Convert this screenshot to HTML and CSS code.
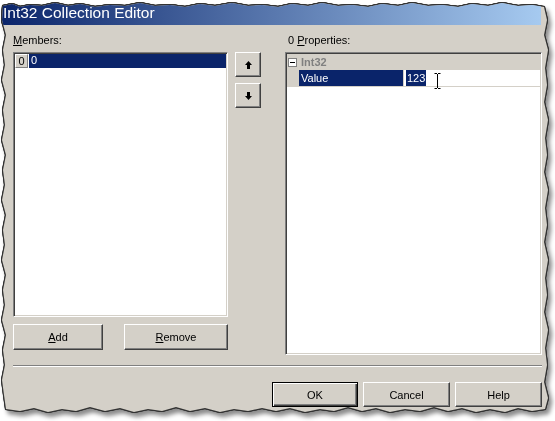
FILE: index.html
```html
<!DOCTYPE html>
<html>
<head>
<meta charset="UTF-8">
<link rel="stylesheet" href="styles.css">
</head>
<body>
<div class="sheet">
  <div class="dialog">
    <div class="title">Int32 Collection Editor</div>
    <div class="body">
      <div class="members">
        <div class="label"><u>M</u>embers:</div>
        <div class="listbox">
          <div class="item"><span class="idx">0</span><span class="name">0</span></div>
        </div>
        <div class="list-buttons">
          <button class="btn add"><u>A</u>dd</button>
          <button class="btn remove"><u>R</u>emove</button>
        </div>
      </div>
      <div class="arrows">
        <button class="btn arrow">
          <svg width="7" height="8" viewBox="0 0 7 8"><polygon points="3.5,0 7,4 5,4 5,8 2,8 2,4 0,4" fill="#000"/></svg>
        </button>
        <button class="btn arrow">
          <svg width="7" height="8" viewBox="0 0 7 8"><polygon points="3.5,8 7,4 5,4 5,0 2,0 2,4 0,4" fill="#000"/></svg>
        </button>
      </div>
      <div class="props">
        <div class="label plabel">0 <u>P</u>roperties:</div>
        <div class="grid">
          <div class="cat"><span class="toggle"></span>Int32</div>
          <div class="prop">
            <span class="pmargin"></span>
            <span class="pname">Value</span>
            <span class="pval"><span class="sel">123</span>
              <svg class="ibeam" width="7" height="16" viewBox="0 0 7 16"><path d="M0.5 0.5h2.5M4 0.5h2.5M3.5 1v14M0.5 15.5h2.5M4 15.5h2.5" stroke="#000" fill="none"/></svg>
            </span>
          </div>
        </div>
      </div>
    </div>
    <div class="sep"></div>
    <div class="footer">
      <button class="btn default">OK</button>
      <button class="btn">Cancel</button>
      <button class="btn">Help</button>
    </div>
  </div>
</div>
</body>
</html>
```
FILE: styles.css
```css
* {
  box-sizing: border-box;
}

body {
  margin: 0;
  background: #fff;
  font-family: "Liberation Sans", Arial, sans-serif;
  font-size: 11px;
  color: #000;
}

.sheet {
  width: 555px;
  height: 421px;
  filter: drop-shadow(1px 0 0 #333) drop-shadow(-1px 0 0 #333) drop-shadow(0 1px 0 #333) drop-shadow(0 -1px 0 #333) drop-shadow(3px 4px 2px rgba(0,0,0,0.45));
}

.dialog {
  width: 548px;
  height: 414px;
  background: #d4d0c8;
  display: flex;
  flex-direction: column;
  clip-path: polygon(3px 6px, 12px 4px, 20px 7px, 30px 5px, 42px 6px, 55px 3px, 68px 6px, 80px 4px, 95px 7px, 110px 5px, 125px 6px, 140px 3px, 155px 6px, 170px 5px, 185px 7px, 200px 4px, 215px 6px, 232px 3px, 248px 6px, 262px 5px, 278px 7px, 292px 4px, 308px 6px, 322px 3px, 338px 6px, 352px 5px, 368px 7px, 382px 4px, 398px 6px, 412px 3px, 428px 6px, 442px 5px, 458px 7px, 472px 4px, 488px 6px, 502px 3px, 518px 6px, 532px 5px, 544px 7px,
    547px 20px, 544px 35px, 548px 50px, 545px 68px, 547px 85px, 544px 102px, 548px 120px, 545px 138px, 547px 155px, 544px 172px, 548px 190px, 545px 208px, 547px 225px, 544px 242px, 548px 260px, 545px 278px, 547px 295px, 544px 312px, 548px 330px, 545px 348px, 547px 365px, 544px 382px, 548px 398px, 545px 409px,
    532px 411px, 518px 408px, 505px 412px, 490px 409px, 476px 412px, 462px 408px, 448px 411px, 434px 407px, 420px 411px, 405px 409px, 390px 412px, 376px 408px, 362px 411px, 348px 407px, 334px 411px, 320px 409px, 305px 412px, 290px 408px, 276px 411px, 262px 408px, 248px 411px, 234px 409px, 220px 412px, 205px 408px, 190px 411px, 176px 407px, 162px 411px, 148px 409px, 134px 412px, 120px 408px, 105px 411px, 90px 407px, 76px 411px, 62px 409px, 48px 412px, 34px 408px, 20px 411px, 6px 409px,
    4px 395px, 2px 380px, 5px 365px, 3px 350px, 6px 335px, 2px 320px, 5px 305px, 3px 290px, 6px 275px, 2px 260px, 5px 245px, 3px 230px, 6px 215px, 2px 200px, 5px 185px, 3px 170px, 6px 155px, 2px 140px, 5px 125px, 3px 110px, 6px 95px, 2px 80px, 5px 65px, 3px 50px, 6px 35px, 2px 20px);
}

.title {
  width: 541px;
  height: 25px;
  flex: none;
  padding: 1px 0 0 3px;
  line-height: 24px;
  font-size: 15.5px;
  color: #fff;
  background: linear-gradient(to right, #0a246a, #a6caf0);
}

.body {
  display: flex;
  padding: 9px 0 0 13px;
}

.label {
  height: 13px;
  line-height: 13px;
  margin-bottom: 5px;
}

.plabel {
  padding-left: 3px;
}

.members {
  width: 215px;
}

.listbox,
.grid {
  background: #fff;
  border: 1px solid;
  border-color: #808080 #fff #fff #808080;
  box-shadow: inset 1px 1px #404040, inset -1px -1px #d4d0c8;
  padding: 1px;
}

.listbox {
  height: 265px;
}

.item {
  display: flex;
  height: 14px;
  line-height: 13px;
}

.idx {
  width: 13px;
  text-align: center;
  background: #d4d0c8;
  border: 1px solid;
  border-color: #fff #808080 #808080 #fff;
}

.name {
  flex: 1;
  margin-left: 1px;
  padding-left: 2px;
  background: #0a246a;
  color: #fff;
}

.btn {
  height: 26px;
  padding: 0;
  font: inherit;
  color: #000;
  background: #d4d0c8;
  border: 1px solid;
  border-color: #fff #404040 #404040 #fff;
  box-shadow: inset -1px -1px #808080;
}

.list-buttons {
  display: flex;
  justify-content: space-between;
  margin-top: 7px;
}

.add {
  width: 90px;
}

.remove {
  width: 104px;
}

.arrows {
  display: flex;
  flex-direction: column;
  gap: 6px;
  margin-left: 7px;
  padding-top: 18px;
}

.arrow {
  width: 26px;
  height: 25px;
  display: flex;
  align-items: center;
  justify-content: center;
}

.props {
  width: 257px;
  margin-left: 24px;
}

.grid {
  height: 303px;
}

.cat {
  display: flex;
  align-items: center;
  height: 16px;
  background: #d4d0c8;
  color: #808080;
  font-weight: bold;
}

.toggle {
  width: 9px;
  height: 9px;
  margin: 0 4px 0 1px;
  border: 1px solid #808080;
  background: linear-gradient(#000, #000) center / 5px 1px no-repeat, #fff;
}

.prop {
  display: flex;
  height: 17px;
  line-height: 16px;
  border-bottom: 1px solid #d4d0c8;
}

.pmargin {
  width: 12px;
  background: #d4d0c8;
}

.pname {
  width: 104px;
  padding-left: 2px;
  background: #0a246a;
  color: #fff;
}

.pval {
  flex: 1;
  display: flex;
  align-items: flex-start;
  padding-left: 2px;
  border-left: 1px solid #d4d0c8;
}

.sel {
  padding: 0 1px;
  background: #0a246a;
  color: #fff;
}

.ibeam {
  margin: 3px 0 0 8px;
}

.sep {
  width: 529px;
  height: 2px;
  margin: 10px 0 0 13px;
  border-top: 1px solid #808080;
  border-bottom: 1px solid #fff;
}

.footer {
  display: flex;
  gap: 5px;
  margin-top: 15px;
  padding-left: 272px;
}

.footer .btn {
  width: 87px;
  height: 25px;
}

.footer .default {
  width: 86px;
  border: 1px solid #000;
  box-shadow: inset 1px 1px #fff, inset -1px -1px #404040, inset -2px -2px #808080;
}
```
